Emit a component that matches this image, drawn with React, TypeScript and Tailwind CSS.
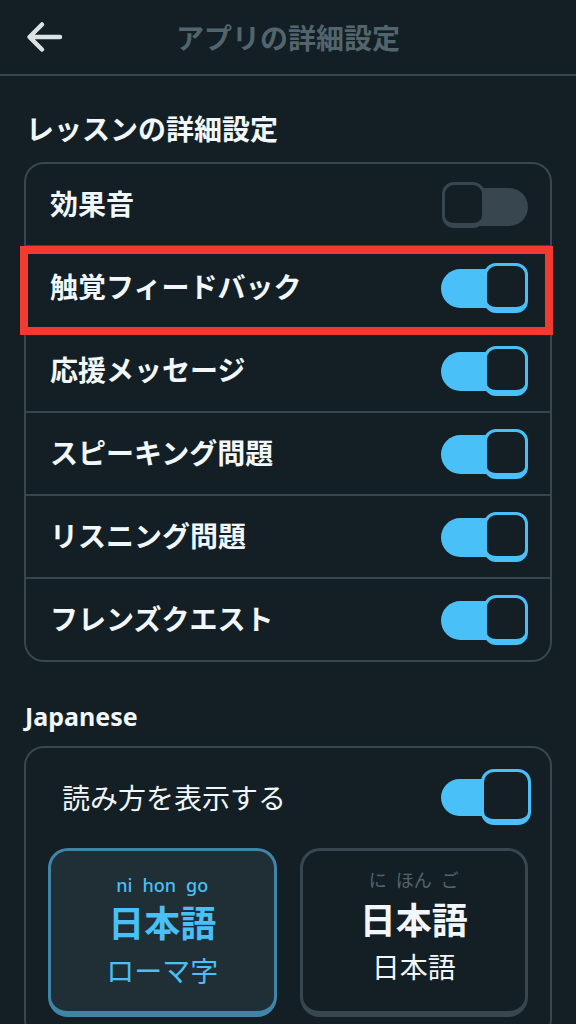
import React from "react";

const JP = { fontFamily: '"Noto Sans CJK JP", "Noto Sans", sans-serif' };
const LAT = { fontFamily: '"Noto Sans", "Noto Sans CJK JP", sans-serif' };

function Toggle({ on, big = false }: { on: boolean; big?: boolean }) {
  if (big) {
    return (
      <div className="relative w-[90px] h-[56px] shrink-0">
        <div className="absolute left-0 right-[6px] top-[10px] h-[37px] rounded-full bg-[#49C0F8]" />
        <div className="absolute right-0 top-0 w-[50px] h-[56px] rounded-[13px] border-[3px] border-b-[6px] border-[#49C0F8] bg-[#131F24]" />
      </div>
    );
  }
  if (on) {
    return (
      <div className="relative w-[87px] h-[50px] shrink-0">
        <div className="absolute left-0 right-[6px] top-[6px] h-[39px] rounded-full bg-[#49C0F8]" />
        <div className="absolute right-0 top-0 w-[44px] h-[50px] rounded-[12px] border-[3px] border-b-[6px] border-[#49C0F8] bg-[#131F24]" />
      </div>
    );
  }
  return (
    <div className="relative w-[86px] h-[46px] shrink-0">
      <div className="absolute left-0 right-0 top-[6px] h-[38px] rounded-full bg-[#37464F]" />
      <div className="absolute left-0 top-0 w-[43px] h-[46px] rounded-[12px] border-[3px] border-b-[5px] border-[#37464F] bg-[#131F24]" />
    </div>
  );
}

function Row({
  label,
  on,
  last = false,
  highlight = false,
}: {
  label: string;
  on: boolean;
  last?: boolean;
  highlight?: boolean;
}) {
  return (
    <div
      className={
        "relative flex items-center justify-between pl-[24px] pr-[22px] " +
        (last ? "h-[81px]" : "h-[83px] border-b-2 border-[#37464F]")
      }
    >
      <span className="text-[28px] font-bold text-[#F1F7FB] leading-none -mt-[4px]" style={JP}>
        {label}
      </span>
      <Toggle on={on} />
      {highlight && (
        <div className="absolute left-[-6px] top-[-1px] w-[533px] h-[89px] border-[8px] border-[#F23A30] pointer-events-none" />
      )}
    </div>
  );
}

export default function App() {
  return (
    <div className="w-[576px] h-[1024px] overflow-hidden bg-[#131F24]">
      {/* Header */}
      <div className="h-[76px] border-b-2 border-[#37464F] grid grid-cols-[1fr_auto_1fr] items-center">
        <div className="pl-[25px] flex items-center">
          <svg width="38" height="32" viewBox="0 0 38 32" fill="none">
            <path
              d="M35 16H5M17 3.5L4.5 16L17 28.5"
              stroke="#DCE1E4"
              strokeWidth="4.5"
              strokeLinecap="round"
              strokeLinejoin="round"
            />
          </svg>
        </div>
        <div className="text-[28px] font-bold text-[#52656D] leading-none" style={JP}>
          アプリの詳細設定
        </div>
        <div />
      </div>

      {/* Lesson settings */}
      <div className="px-[24px]">
        <div className="pt-[32px] pl-[2px] text-[28px] font-bold text-[#F1F7FB] leading-[40px]" style={JP}>
          レッスンの詳細設定
        </div>
        <div className="mt-[14px] border-2 border-[#37464F] rounded-[20px]">
          <Row label="効果音" on={false} />
          <Row label="触覚フィードバック" on={true} highlight />
          <Row label="応援メッセージ" on={true} />
          <Row label="スピーキング問題" on={true} />
          <Row label="リスニング問題" on={true} />
          <Row label="フレンズクエスト" on={true} last />
        </div>

        <div className="mt-[38px] pl-[1px] text-[25px] font-bold text-[#F1F7FB] leading-[32px]" style={LAT}>
          Japanese
        </div>

        <div className="mt-[14px] border-2 border-[#37464F] rounded-[20px] pb-[20px]">
          <div className="flex items-center justify-between pl-[36px] pr-[19px] pt-[21px]">
            <span className="text-[28px] text-[#F1F7FB] leading-none" style={JP}>
              読み方を表示する
            </span>
            <Toggle on={true} big />
          </div>
          <div className="mt-[23px] px-[22px] grid grid-cols-2 gap-[23px]">
            <div className="h-[169px] rounded-[20px] border-[3px] border-b-[6px] border-[#3F85A7] bg-[#202F36] flex flex-col items-center pt-[23px]">
              <div className="flex gap-[10px] text-[18px] font-medium text-[#49C0F8] leading-[22px]" style={LAT}>
                <span>ni</span>
                <span>hon</span>
                <span>go</span>
              </div>
              <div className="mt-[5px] text-[36px] font-bold text-[#49C0F8] leading-[40px]" style={JP}>
                日本語
              </div>
              <div className="mt-[11px] text-[28px] text-[#49C0F8] leading-[36px]" style={JP}>
                ローマ字
              </div>
            </div>
            <div className="h-[169px] rounded-[20px] border-[3px] border-b-[6px] border-[#37464F] bg-[#131F24] flex flex-col items-center pt-[17px]">
              <div className="flex gap-[9px] text-[18px] text-[#52656D] leading-[22px]" style={JP}>
                <span>に</span>
                <span>ほん</span>
                <span>ご</span>
              </div>
              <div className="mt-[8px] text-[36px] font-bold text-[#F1F7FB] leading-[40px]" style={JP}>
                日本語
              </div>
              <div className="mt-[10px] text-[28px] text-[#F1F7FB] leading-[36px]" style={JP}>
                日本語
              </div>
            </div>
          </div>
        </div>
      </div>
    </div>
  );
}
